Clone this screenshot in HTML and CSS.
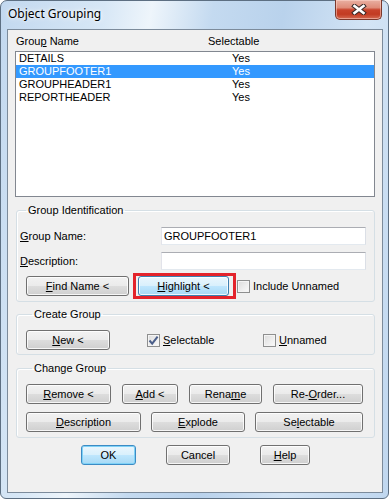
FILE: index.html
```html
<!DOCTYPE html>
<html lang="en">
<head>
    <meta charset="UTF-8">
    <title>Object Grouping</title>
    <link rel="stylesheet" href="styles.css">
</head>
<body>
    <div class="window">
        <div class="titlebar">
            <span class="title">Object Grouping</span>
            <button type="button" class="close">
                <svg width="16" height="11" viewBox="0 0 16 11">
                    <path d="M3.5 2 L12.5 9 M12.5 2 L3.5 9" stroke="#3a2a28" stroke-width="4.6" stroke-linecap="square"/>
                    <path d="M3.5 2 L12.5 9 M12.5 2 L3.5 9" stroke="#fff" stroke-width="2.6" stroke-linecap="square"/>
                </svg>
            </button>
        </div>

        <div class="client">
            <div class="list-head">
                <span class="head-name">Grou<u>p</u> Name</span>
                <span>Selectable</span>
            </div>
            <div class="listbox">
                <div class="row"><span class="col-name">DETAILS</span><span>Yes</span></div>
                <div class="row selected"><span class="col-name">GROUPFOOTER1</span><span>Yes</span></div>
                <div class="row"><span class="col-name">GROUPHEADER1</span><span>Yes</span></div>
                <div class="row"><span class="col-name">REPORTHEADER</span><span>Yes</span></div>
            </div>

            <fieldset class="group ident">
                <legend>Group Identification</legend>
                <div class="field">
                    <label><u>G</u>roup Name:</label>
                    <input type="text" class="text" value="GROUPFOOTER1">
                </div>
                <div class="field field-last">
                    <label><u>D</u>escription:</label>
                    <input type="text" class="text" value="">
                </div>
                <div class="btn-row ident-row">
                    <button type="button" class="btn btn-find"><u>F</u>ind Name &lt;</button>
                    <div class="marker">
                        <button type="button" class="btn btn-hot btn-highlight"><u>H</u>ighlight &lt;</button>
                    </div>
                    <label class="check check-inc"><span class="box"></span>Include Unnamed</label>
                </div>
            </fieldset>

            <fieldset class="group create">
                <legend>Create Group</legend>
                <div class="btn-row">
                    <button type="button" class="btn btn-new"><u>N</u>ew &lt;</button>
                    <label class="check check-sel">
                        <span class="box">
                            <svg width="11" height="11" viewBox="0 0 11 11"><path d="M1.5 5.5 L4.2 8.6 L9.6 1.6" fill="none" stroke="#4b5f8a" stroke-width="2"/></svg>
                        </span><u>S</u>electable
                    </label>
                    <label class="check"><span class="box"></span><u>U</u>nnamed</label>
                </div>
            </fieldset>

            <fieldset class="group change">
                <legend>Change Group</legend>
                <div class="btn-row row-one">
                    <button type="button" class="btn btn-remove"><u>R</u>emove &lt;</button>
                    <button type="button" class="btn btn-add"><u>A</u>dd &lt;</button>
                    <button type="button" class="btn btn-rename">Rena<u>m</u>e</button>
                    <button type="button" class="btn btn-reorder">Re-<u>O</u>rder...</button>
                </div>
                <div class="btn-row row-two">
                    <button type="button" class="btn btn-desc"><u>D</u>escription</button>
                    <button type="button" class="btn btn-explode"><u>E</u>xplode</button>
                    <button type="button" class="btn btn-selectable">Se<u>l</u>ectable</button>
                </div>
            </fieldset>

            <div class="btn-row footer">
                <button type="button" class="btn btn-ok">OK</button>
                <button type="button" class="btn btn-cancel">Cancel</button>
                <button type="button" class="btn btn-help"><u>H</u>elp</button>
            </div>
        </div>
    </div>
</body>
</html>
```

FILE: styles.css
```css
body {
    margin: 0;
    font: 11px "Liberation Sans", Arial, sans-serif;
    color: #000;
}

.window {
    width: 389px;
    height: 499px;
    box-sizing: border-box;
    padding: 0 5px 5px 6px;
    border: 1px solid #5d6f82;
    border-radius: 7px 7px 6px 6px;
    background: linear-gradient(100deg, #c2d8ef 0%, #d7e7f6 22%, #eef5fb 32%, #c4daf0 45%, #b9d2ec 60%, #d3e4f5 78%, #c0d7ef 100%);
}

/* title bar */
.titlebar {
    height: 28px;
    display: flex;
    align-items: flex-start;
}
.title {
    margin: 5px 0 0 1px;
    font: 12px "Noto Sans", "Open Sans", sans-serif;
    line-height: 16px;
    text-shadow: 0 0 6px #fff, 0 0 3px #fff;
}
.close {
    margin: -1px 1px 0 auto;
    width: 47px;
    height: 20px;
    padding: 0;
    border: 1px solid #7b382c;
    border-top: none;
    border-radius: 0 0 5px 5px;
    background: linear-gradient(#e9b0a2 0%, #df8c79 40%, #c8432b 52%, #c23b22 75%, #d46a52 100%);
    box-shadow: inset 0 0 0 1px rgba(255, 220, 210, .5);
    display: flex;
    align-items: center;
    justify-content: center;
}

/* client area */
.client {
    height: 464px;
    box-sizing: border-box;
    border: 1px solid #7c8b9b;
    background: #f0f0f0;
    padding-top: 5px;
}

.list-head {
    display: flex;
    line-height: 13px;
    margin: 0 0 3px 8px;
}
.head-name {
    width: 192px;
}
.listbox {
    margin: 0 7px 0 7px;
    height: 146px;
    box-sizing: border-box;
    border: 1px solid #828790;
    background: #fff;
}
.row {
    display: flex;
    height: 13px;
    line-height: 13px;
}
.col-name {
    width: 213px;
    padding-left: 3px;
}
.selected {
    background: #3399ff;
    color: #fff;
}

/* group boxes */
.group {
    margin: 7px 7px 0 8px;
    padding: 0;
    min-width: 0;
    border: 1px solid #d5dfe5;
    border-radius: 3px;
    box-shadow: inset 1px 1px 0 #fff;
}
.group legend {
    margin-left: 6px;
    padding: 0 2px;
    line-height: 13px;
}

.ident {
    padding: 10px 0 5px 3px;
}
.field {
    display: flex;
    align-items: center;
    height: 18px;
    margin-bottom: 7px;
}
.field-last {
    margin-bottom: 6px;
}
.field label {
    width: 141px;
}
.text {
    width: 205px;
    height: 18px;
    box-sizing: border-box;
    margin: 0;
    padding: 0 2px;
    border: 1px solid #abadb3;
    border-color: #abadb3 #dbdfe6 #e3e9ef #e2e3ea;
    font: inherit;
    color: #000;
}

.btn-row {
    display: flex;
    align-items: center;
}
.ident-row {
    margin-left: 6px;
}

.btn {
    height: 20px;
    box-sizing: border-box;
    padding: 0;
    border: 1px solid #707070;
    border-radius: 3px;
    background: linear-gradient(#f2f2f2 0%, #ebebeb 48%, #dddddd 52%, #cfcfcf 100%);
    box-shadow: inset 0 0 0 1px rgba(255, 255, 255, .8);
    font: inherit;
    color: #000;
}
.btn-hot {
    border-color: #3c7fb1;
    background: linear-gradient(#eaf6fd 0%, #d9f0fc 48%, #bee6fd 52%, #a7d9f5 100%);
}

.btn-find { width: 103px; }
.marker {
    margin: -3px 0 -3px 4px;
    padding: 0 4px 0 2px;
    border: 3px solid #e3232b;
    display: flex;
}
.btn-highlight { width: 91px; }

.check {
    display: flex;
    align-items: center;
}
.box {
    width: 13px;
    height: 13px;
    box-sizing: border-box;
    margin-right: 3px;
    border: 1px solid #8e8f8f;
    background: linear-gradient(135deg, #dcdcdc, #fbfbfb);
    box-shadow: inset 0 0 0 1px #f4f4f4;
    display: flex;
    align-items: center;
    justify-content: center;
}
.check-inc {
    margin-left: 1px;
}

.create {
    margin-top: 6px;
    padding: 9px 0 4px 9px;
}
.btn-new { width: 84px; }
.check-sel {
    margin-left: 37px;
    width: 116px;
}

.change {
    padding: 9px 0 5px 9px;
}
.row-one {
    gap: 11px;
}
.row-two {
    gap: 10px;
    margin-top: 8px;
}
.btn-remove { width: 85px; }
.btn-add { width: 56px; }
.btn-rename { width: 73px; }
.btn-reorder { width: 90px; }
.btn-desc { width: 115px; }
.btn-explode { width: 94px; }
.btn-selectable { width: 108px; }

.footer {
    margin: 7px 0 0 73px;
    gap: 30px;
}
.btn-ok {
    width: 55px;
    border-color: #3c8bc4;
    background: linear-gradient(#eaf6fd 0%, #d9f0fc 48%, #bee6fd 52%, #a7d9f5 100%);
    box-shadow: inset 0 0 0 1px #7fd2f7;
}
.btn-cancel { width: 64px; }
.btn-help { width: 50px; }
```
